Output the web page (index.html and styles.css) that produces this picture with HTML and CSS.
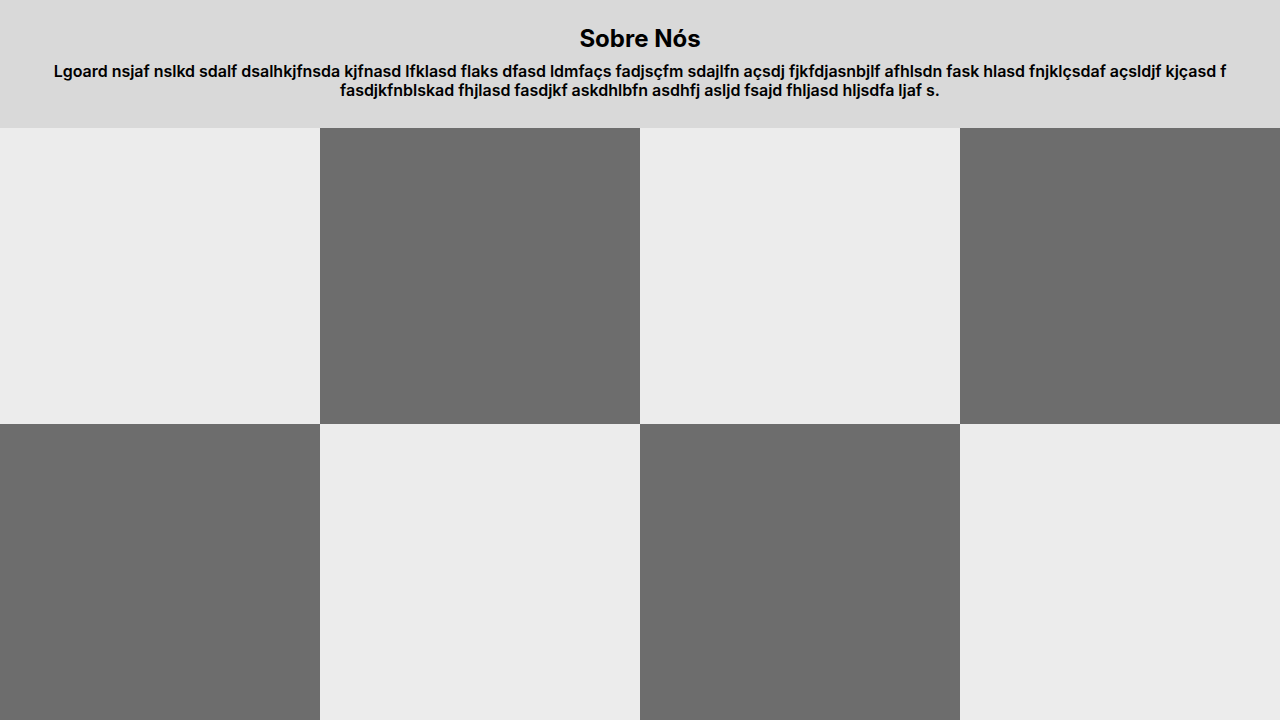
FILE: index.html
```html
<!DOCTYPE html>
<html lang="pt">
<head>
<meta charset="utf-8">
<link rel="stylesheet" href="styles.css">
</head>
<body>
<header class="about">
  <h1 class="about-title">Sobre Nós</h1>
  <p class="about-text">Lgoard nsjaf nslkd sdalf dsalhkjfnsda kjfnasd lfklasd flaks dfasd ldmfaçs fadjsçfm sdajlfn açsdj fjkfdjasnbjlf afhlsdn fask hlasd fnjklçsdaf açsldjf kjçasd f fasdjkfnblskad fhjlasd fasdjkf askdhlbfn asdhfj asljd fsajd fhljasd hljsdfa ljaf s.</p>
</header>
<main class="grid">
  <div class="tile light"></div>
  <div class="tile dark"></div>
  <div class="tile light"></div>
  <div class="tile dark"></div>
  <div class="tile dark"></div>
  <div class="tile light"></div>
  <div class="tile dark"></div>
  <div class="tile light"></div>
</main>
</body>
</html>
```
FILE: styles.css
```css
* { box-sizing: border-box; }
html, body { margin: 0; padding: 0; }
body {
  font-family: Inter, "Noto Sans", sans-serif;
  color: #000;
  background: #ececec;
  overflow: hidden;
}
.about {
  height: 128px;
  background: #d9d9d9;
  padding: 24px 40px 0;
  text-align: center;
}
.about-title {
  margin: 0;
  font-size: 24px;
  font-weight: 700;
}
.about-text {
  margin: 9px 0 0;
  font-size: 16px;
  font-weight: 600;
  line-height: 19px;
  letter-spacing: -0.025px;
}
.grid {
  display: grid;
  grid-template-columns: repeat(4, 1fr);
  grid-template-rows: 296px 296px;
}
.light { background: #ececec; }
.dark { background: #6d6d6d; }
```
